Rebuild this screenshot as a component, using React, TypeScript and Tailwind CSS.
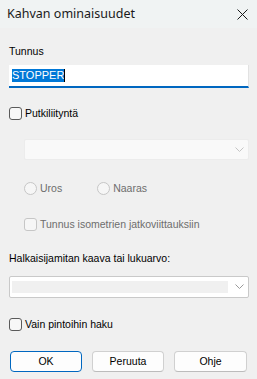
import React from "react";

const body = { fontFamily: '"Liberation Sans", Arial, sans-serif' };

function Chevron({ color = "#b8b8b8" }: { color?: string }) {
  return (
    <svg width="9" height="6" viewBox="0 0 9 6" className="block">
      <path d="M0.5 0.5 L4.5 4.5 L8.5 0.5" fill="none" stroke={color} strokeWidth="1" />
    </svg>
  );
}

function Check({ disabled = false, label }: { disabled?: boolean; label: string }) {
  return (
    <div className="flex items-center h-[13px]">
      <div
        className={
          disabled
            ? "w-[13px] h-[13px] rounded-[3px] border border-[#c6c6c6] bg-[#f6f6f6]"
            : "w-[13px] h-[13px] rounded-[3px] border border-[#5a5a5a] bg-[#f7f7f7]"
        }
      />
      <span
        className={
          "ml-[3px] text-[10.5px] leading-[13px] " + (disabled ? "text-[#6d6d6d]" : "text-black")
        }
      >
        {label}
      </span>
    </div>
  );
}

function Radio({ label }: { label: string }) {
  return (
    <div className="flex items-center h-[13px]">
      <div className="w-[13px] h-[13px] rounded-full border border-[#c6c6c6] bg-[#f6f6f6]" />
      <span className="ml-[3px] text-[10.5px] leading-[13px] text-[#6d6d6d]">{label}</span>
    </div>
  );
}

export default function App() {
  return (
    <div className="w-[257px] h-[379px] bg-[#f0f0f0] flex flex-col overflow-hidden" style={body}>
      <div className="h-[28px] bg-[#f0f3f3] flex items-center justify-between pl-[7px] pr-[9px]">
        <span
          className="text-[12.5px] text-[#1a1a1a]"
          style={{ fontFamily: '"Noto Sans", "Open Sans", sans-serif' }}
        >
          Kahvan ominaisuudet
        </span>
        <svg width="11" height="11" viewBox="0 0 11 11" className="block">
          <path d="M0.5 0.5 L10.5 10.5 M10.5 0.5 L0.5 10.5" stroke="#1a1a1a" strokeWidth="1" />
        </svg>
      </div>

      <div className="flex flex-col pl-[9px] pr-[8px]">
        <div className="mt-[17px] text-[10.5px] leading-[13px] text-black">Tunnus</div>

        <div className="mt-[7px] h-[23px] bg-white border-r border-[#e2e2e2] border-b-2 border-b-[#0067c0] flex items-center pl-[3px]">
          <span className="bg-[#0078d7] text-white text-[11px] leading-[13px] h-[13px]">STOPPER</span>
          <span className="w-px h-[13px] bg-black" />
        </div>

        <div className="mt-[19px]">
          <Check label="Putkiliityntä" />
        </div>

        <div className="ml-[15px] mt-[19px] h-[21px] bg-[#f9f9f9] border border-[#ececec] rounded-[2px] flex items-center justify-end pr-[4px]">
          <Chevron color="#c4c4c4" />
        </div>

        <div className="ml-[15px] mt-[22px] flex items-center gap-[35px]">
          <Radio label="Uros" />
          <Radio label="Naaras" />
        </div>

        <div className="ml-[15px] mt-[23px]">
          <Check disabled label="Tunnus isometrien jatkoviittauksiin" />
        </div>

        <div className="mt-[21px] text-[10.5px] leading-[13px] text-black">
          Halkaisijamitan kaava tai lukuarvo:
        </div>

        <div className="mt-[11px] h-[22px] bg-white border border-[#c9c9c9] rounded-[2px] flex items-center pl-[2px] pr-[4px]">
          <div className="flex-1 h-[12px] bg-[#f0f0f0]" />
          <div className="ml-[7px]">
            <Chevron color="#9a9a9a" />
          </div>
        </div>

        <div className="mt-[20px]">
          <Check label="Vain pintoihin haku" />
        </div>

        <div className="mt-[20px] flex gap-[10px] pl-[1px]">
          <div className="w-[72px] h-[21px] rounded-[4px] border border-[#0067c0] bg-[#fdfdfd] flex items-center justify-center text-[10.5px] text-black">
            OK
          </div>
          <div className="w-[72px] h-[21px] rounded-[4px] border border-[#d0d0d0] border-b-[#bcbcbc] bg-[#fdfdfd] flex items-center justify-center text-[10.5px] text-black">
            Peruuta
          </div>
          <div className="w-[73px] h-[21px] rounded-[4px] border border-[#d0d0d0] border-b-[#bcbcbc] bg-[#fdfdfd] flex items-center justify-center text-[10.5px] text-black">
            Ohje
          </div>
        </div>
      </div>
    </div>
  );
}
